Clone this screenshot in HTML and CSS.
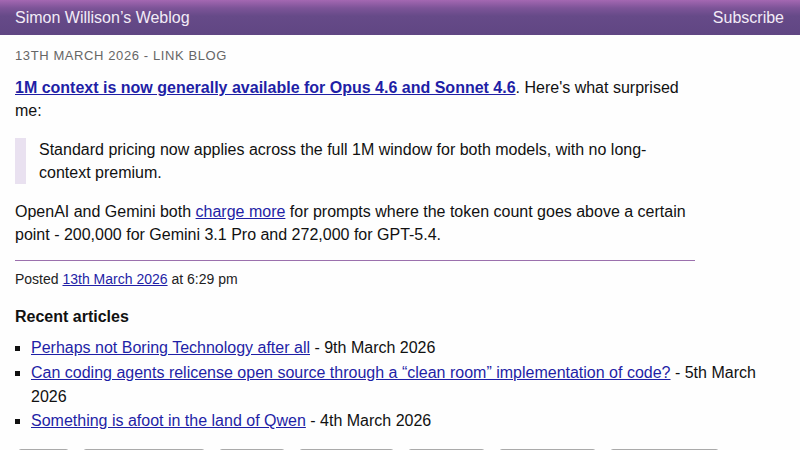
FILE: index.html
```html
<!DOCTYPE html>
<html>
<head>
<meta charset="utf-8">
<link rel="stylesheet" href="styles.css">
</head>
<body>
<header class="site-header">
  <a class="brand" href="#">Simon Willison’s Weblog</a>
  <a class="subscribe" href="#">Subscribe</a>
</header>
<main class="page">
  <div class="entry">
    <p class="dateline">13th March 2026 - Link Blog</p>
    <div class="entry-body">
      <p><a class="title" href="#">1M context is now generally available for Opus 4.6 and Sonnet 4.6</a>. Here's what surprised me:</p>
      <blockquote><p>Standard pricing now applies across the full 1M window for both models, with no long-context premium.</p></blockquote>
      <p>OpenAI and Gemini both <a href="#">charge more</a> for prompts where the token count goes above a certain point - 200,000 for Gemini 3.1 Pro and 272,000 for GPT-5.4.</p>
    </div>
    <p class="posted">Posted <a href="#">13th March 2026</a> at 6:29 pm</p>
  </div>
  <section class="recent">
    <h3>Recent articles</h3>
    <ul>
      <li><a href="#">Perhaps not Boring Technology after all</a> - 9th March 2026</li>
      <li><a href="#">Can coding agents relicense open source through a “clean room” implementation of code?</a> - 5th March 2026</li>
      <li><a href="#">Something is afoot in the land of Qwen</a> - 4th March 2026</li>
    </ul>
  </section>
  <div class="tags">
    <a class="tag t1" href="#">ai</a>
    <a class="tag t2" href="#">generative-ai</a>
    <a class="tag t3" href="#">llms</a>
    <a class="tag t4" href="#">anthropic</a>
    <a class="tag t5" href="#">claude</a>
    <a class="tag t6" href="#">llm-pricing</a>
    <a class="tag t7" href="#">long-context</a>
  </div>
</main>
</body>
</html>
```
FILE: styles.css
```css
html, body {
  margin: 0;
  padding: 0;
  background: #fefefe;
}
body {
  font-family: "Liberation Sans", Helvetica, Arial, sans-serif;
  color: #111;
  font-size: 16px;
  line-height: 23px;
}
a {
  color: #1f1fa6;
}
.site-header {
  height: 35px;
  display: flex;
  align-items: center;
  justify-content: space-between;
  padding: 0 16px 0 15px;
  background: linear-gradient(to bottom, #a468b2 0, #7d5498 8px, #664a88 16px, #604683 35px);
}
.site-header a {
  color: #f3ebf7;
  text-decoration: none;
  font-size: 16px;
}
.page {
  padding: 0 15px;
}
.entry {
  width: 680px;
}
.dateline {
  margin: 12px 0 11px;
  font-size: 13px;
  line-height: 18px;
  text-transform: uppercase;
  letter-spacing: 0.6px;
  color: #666;
}
.entry-body {
  border-bottom: 1px solid #9b70ad;
  padding-bottom: 14px;
}
.entry-body p {
  margin: 0 0 16px;
}
.entry-body > p:last-child {
  margin-bottom: 0;
}
.title {
  font-weight: bold;
}
blockquote {
  margin: 0 0 16px;
  border-left: 11px solid #e9e1f0;
  padding-left: 13px;
}
blockquote p {
  margin: 0;
}
.posted {
  margin: 9px 0 0;
  font-size: 14px;
  line-height: 18px;
  color: #222;
}
.recent h3 {
  margin: 19px 0 9px;
  font-size: 16px;
  line-height: 20px;
}
.recent ul {
  margin: 0;
  padding-left: 16px;
  list-style: square;
}
.recent li {
  line-height: 24px;
  margin-bottom: 0.5px;
}
.tags {
  display: flex;
  gap: 14px;
  margin-top: 16px;
  padding-left: 3px;
}
.tag {
  display: block;
  border: 1px solid #aaa;
  border-radius: 3px;
  height: 24px;
  font-size: 13px;
  line-height: 24px;
  text-decoration: none;
  text-align: center;
  color: #333;
  box-sizing: border-box;
}
.t1 { width: 51px; }
.t2 { width: 122px; }
.t3 { width: 66px; }
.t4 { width: 95px; }
.t5 { width: 77px; }
.t6 { width: 97px; }
.t7 { width: 109px; }
```
